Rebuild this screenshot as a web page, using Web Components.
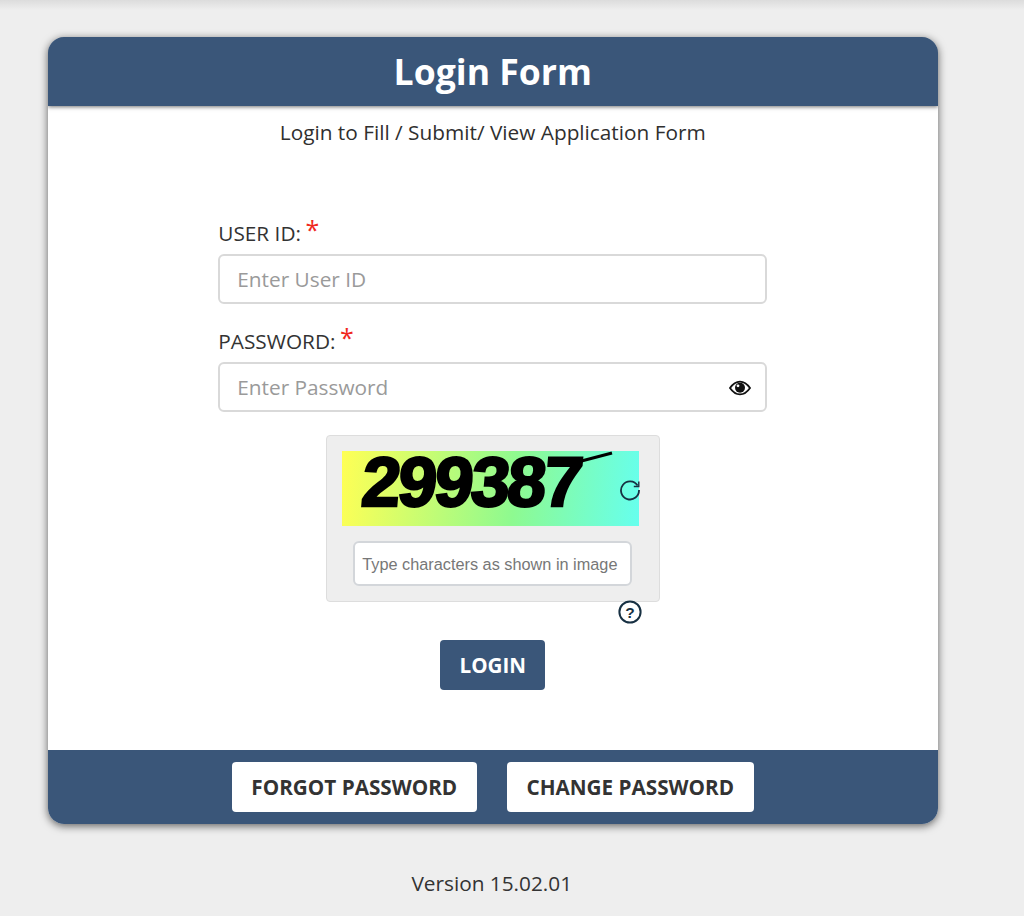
<!DOCTYPE html>
<html lang="en">
<head>
<meta charset="utf-8">
<title>Login Form</title>
<style>
html,body{margin:0;padding:0;height:916px;overflow:hidden}
body{background:#eee;font-family:"Open Sans","Liberation Sans",sans-serif;color:#333}
</style>
</head>
<body>
<login-page></login-page>
<template id="t-page">
<style>
:host{display:block;height:916px;box-sizing:border-box;padding:37px 86px 0 47.5px;position:relative}
.top{position:absolute;left:0;right:0;top:0;height:10px;background:linear-gradient(#dcdcdc,#eee)}
.ver{text-align:center;font-size:20.8px;line-height:26px;margin-top:46px;padding-right:2px;color:#333}
</style>
<div class="top"></div>
<login-card></login-card>
<div class="ver">Version 15.02.01</div>
</template>

<template id="t-card">
<style>
:host{display:block;position:relative;border-radius:16px;box-shadow:0 2px 8px rgba(0,0,0,.6);background:#fff;overflow:hidden;height:787px;display:flex;flex-direction:column}
header{background:#3a5679;color:#fff;height:69px;font-size:35.6px;font-weight:700;line-height:69px;text-align:center;box-shadow:0 1px 4px rgba(0,0,0,.55);position:relative;flex:none}
.sub{font-size:20.8px;line-height:26px;text-align:center;margin-top:13px;color:#2f2f2f;flex:none}
main{flex:1;display:flex;flex-direction:column;align-items:center}
.form{width:549px;margin-top:71px;display:flex;flex-direction:column}
footer{height:74px;background:#3a5679;display:flex;justify-content:center;gap:30px;padding:12px 0 12px;box-sizing:border-box;flex:none;border-top:0}
</style>
<header>Login Form</header>
<main>
<div class="sub">Login to Fill / Submit/ View Application Form</div>
<div class="form">
<form-field label="USER ID:" placeholder="Enter User ID"></form-field>
<form-field label="PASSWORD:" placeholder="Enter Password" eye style="margin-top:20px"></form-field>
</div>
<captcha-box></captcha-box>
<blue-button>LOGIN</blue-button>
</main>
<footer>
<white-button style="width:245px">FORGOT PASSWORD</white-button>
<white-button style="width:247px">CHANGE PASSWORD</white-button>
</footer>
</template>

<template id="t-field">
<style>
:host{display:block}
label{display:block;font-size:20.8px;line-height:26px;height:32px;padding-top:4px;box-sizing:border-box;color:#333;margin-bottom:6px}
.star{color:#f0281e;font-size:25px;line-height:20px;margin-left:-1px;position:relative;top:-2px}
.box{height:50px;box-sizing:border-box;border:2px solid #d9d9d9;border-radius:6px;background:#fff;display:flex;align-items:center;padding:0 14px 0 17px;justify-content:space-between}
.ph{font-size:20.8px;color:#9a9a9a}
svg{display:block;position:relative;top:1px}
</style>
<label><span class="lab"></span> <span class="star">*</span></label>
<div class="box"><span class="ph"></span><slot name="x"></slot></div>
</template>

<template id="t-captcha">
<style>
:host{display:block;position:relative;width:334px;height:167px;box-sizing:border-box;margin-top:23px;background:#eee;border:1px solid #ddd;border-radius:4px;padding:15px 20px 0 15px;margin-left:1px}
.img{width:297px;height:75px;background:linear-gradient(96deg,#ffff55,#8efa90 58%,#66ffee);position:relative}
.code{position:absolute;left:20px;top:-4px;font:700 70px/70px "Liberation Sans",sans-serif;color:#000;letter-spacing:-2.5px;-webkit-text-stroke:2.5px #000;transform:skewX(-5deg);white-space:nowrap}
.line{position:absolute;left:0;top:0}
.refresh{position:absolute;left:277px;top:28px}
.inp{width:279px;height:45px;box-sizing:border-box;margin:15px 0 0 11px;background:#fff;border:2px solid #d3d6da;border-radius:6px;font:16.3px/43px "Liberation Sans",sans-serif;color:#777;padding-left:7px;white-space:nowrap}
.help{position:absolute;left:291px;top:164px}
</style>
<div class="img">
<span class="code">299387</span>
<svg class="line" width="297" height="75" viewBox="0 0 297 75"><path d="M228 13L270 2" stroke="#000" stroke-width="3" fill="none"/></svg>
<svg class="refresh" width="22" height="22" viewBox="0 0 22 22" fill="none" stroke="#173042" stroke-width="1.8"><path d="M18.6 6.6A9 9 0 1 0 20 11"/><path d="M19.8 2.5v5h-5" stroke-width="1.4"/></svg>
</div>
<div class="inp">Type characters as shown in image</div>
<svg class="help" width="24" height="24" viewBox="0 0 24 24"><circle cx="12" cy="12" r="10.6" fill="#fff" stroke="#173042" stroke-width="2"/><text x="12" y="17.500" text-anchor="middle" font-family="Liberation Sans" font-weight="700" font-size="15.500" fill="#173042">?</text></svg>
</template>

<template id="t-blue">
<style>
:host{display:block;width:105px;height:50px;margin-top:38px;background:#3a5679;color:#fff;border-radius:4px;text-align:center;font-size:20.6px;font-weight:700;line-height:50px}
</style><slot></slot>
</template>

<template id="t-white">
<style>
:host{display:block;height:50px;background:#fff;color:#333;border-radius:4px;text-align:center;font-size:20.7px;font-weight:700;line-height:50px;white-space:nowrap}
</style><slot></slot>
</template>

<script>
function def(name,tid,init){
  customElements.define(name,class extends HTMLElement{
    constructor(){super();const r=this.attachShadow({mode:'open'});r.appendChild(document.getElementById(tid).content.cloneNode(true));}
    connectedCallback(){if(init)init(this,this.shadowRoot);}
  });
}
def('white-button','t-white');
def('blue-button','t-blue');
def('captcha-box','t-captcha');
def('form-field','t-field',(el,r)=>{
  r.querySelector('.lab').textContent=el.getAttribute('label');
  r.querySelector('.ph').textContent=el.getAttribute('placeholder');
  if(el.hasAttribute('eye')&&!r.querySelector('.eye')){
    r.querySelector('slot').outerHTML='<svg class="eye" width="22" height="16" viewBox="0 0 22 16"><path d="M1 8C4 3.6 7.3 1.6 11 1.6S18 3.6 21 8c-3 4.4-6.300 6.400-10 6.400S4 12.400 1 8Z" fill="#fff" stroke="#111" stroke-width="1.800"/><circle cx="11" cy="7.800" r="5" fill="#111"/><circle cx="9" cy="5.800" r="1.400" fill="#fff"/></svg>';
  }
});
def('login-card','t-card');
def('login-page','t-page');
</script>
</body>
</html>
